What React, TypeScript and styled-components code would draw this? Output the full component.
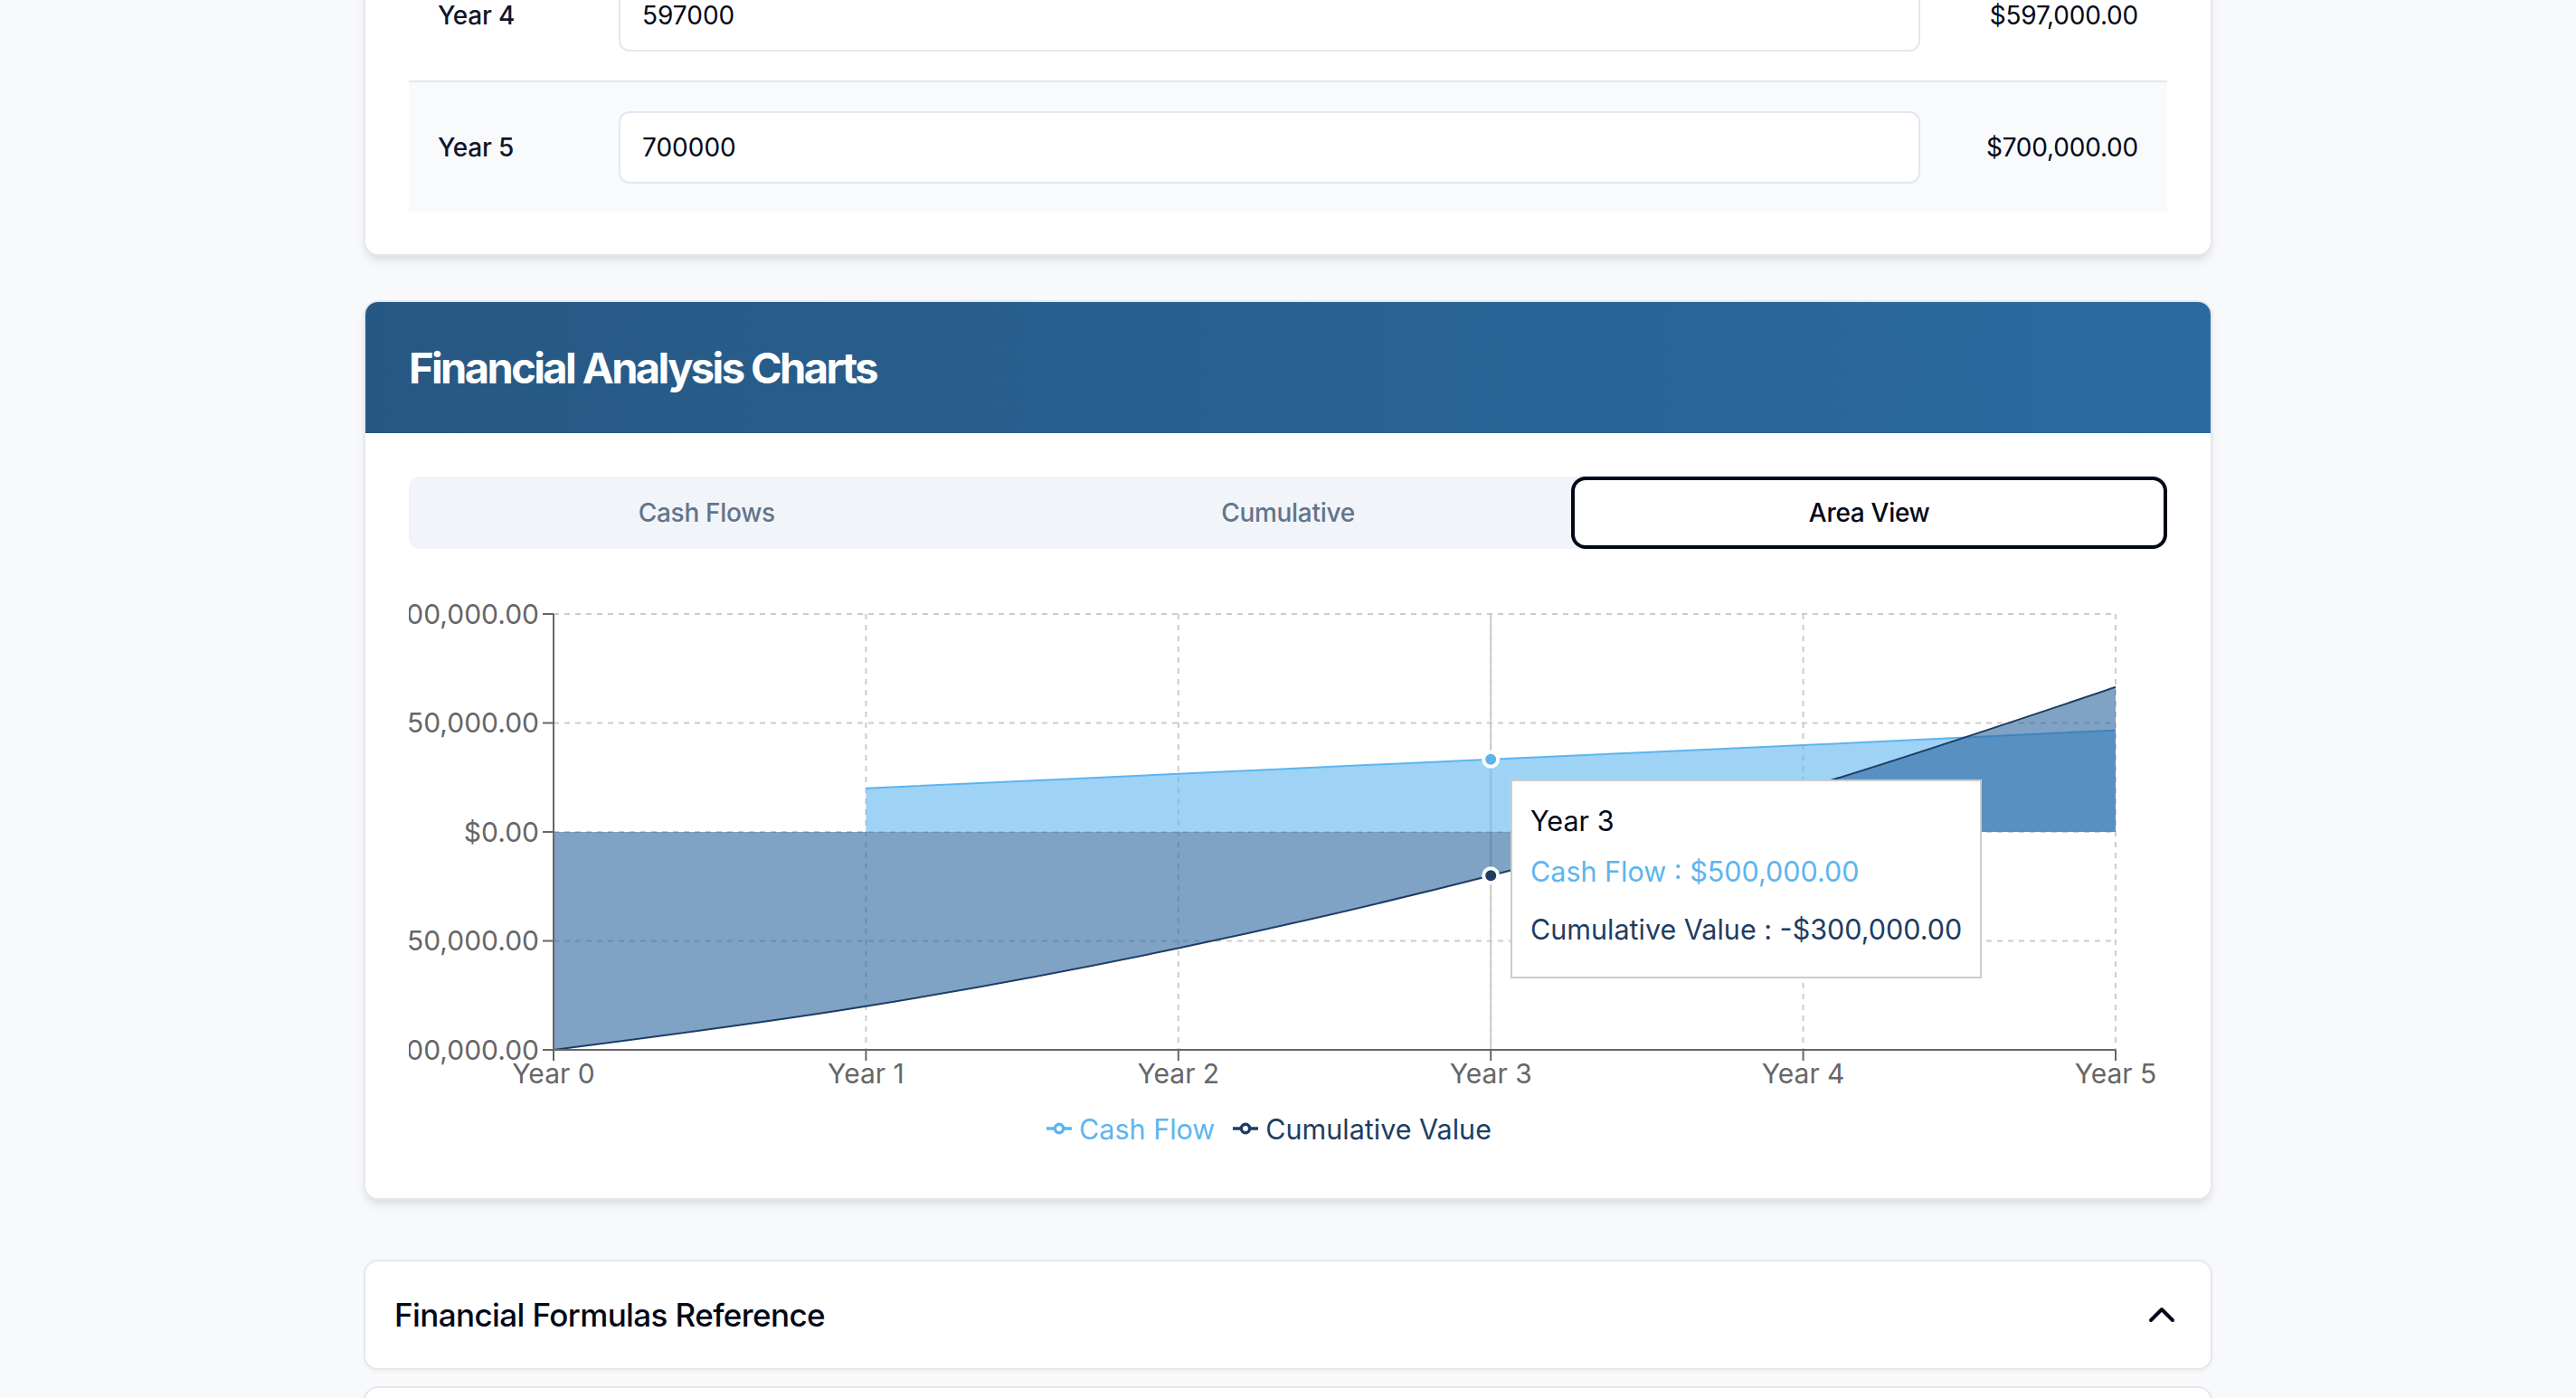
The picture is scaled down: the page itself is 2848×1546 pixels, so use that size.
import React from "react";
import styled, { createGlobalStyle } from "styled-components";
import { ChevronUp } from "lucide-react";

const CASH = "#5db5ef";
const CUM_STROKE = "#1e3d63";
const CUM_FILL = "#2a649e";

const GlobalStyle = createGlobalStyle`
  html, body {
    margin: 0;
    padding: 0;
    background: #f8f9fb;
    overflow: hidden;
  }
  body {
    font-family: Inter, "Noto Sans", "Liberation Sans", sans-serif;
    color: #020817;
  }
  *, *::before, *::after { box-sizing: border-box; }
`;

const Page = styled.main`
  width: 2044px;
  margin: -105px auto 0;
  display: flex;
  flex-direction: column;
`;

const Card = styled.section<{ $gapTop?: number; $raised?: boolean }>`
  margin-top: ${(p) => p.$gapTop ?? 0}px;
  background: #ffffff;
  border: 2px solid #e5e7eb;
  border-radius: 16px;
  overflow: hidden;
  box-shadow: ${(p) =>
    p.$raised
      ? "0 8px 12px -2px rgba(0,0,0,0.08), 0 4px 8px -4px rgba(0,0,0,0.08)"
      : "0 2px 4px rgba(0,0,0,0.04)"};
`;

const InputsBody = styled.div`
  padding: 48px 48px 46px;
`;

const YearRow = styled.div<{ $shaded: boolean; $first: boolean }>`
  display: grid;
  grid-template-columns: 200px 1fr 241px;
  align-items: center;
  padding: 32px;
  background: ${(p) => (p.$shaded ? "#f8fafc" : "transparent")};
  border-top: ${(p) => (p.$first ? "none" : "2px solid #e5e7eb")};
`;

const YearLabel = styled.span`
  font-size: 28px;
  font-weight: 500;
  color: #0f172a;
  letter-spacing: -0.2px;
`;

const AmountInput = styled.input`
  height: 80px;
  width: 100%;
  border: 2px solid #e2e8f0;
  border-radius: 12px;
  padding: 0 24px;
  background: #ffffff;
  font-family: inherit;
  font-size: 28px;
  color: #020817;
  outline: none;
`;

const AmountText = styled.span`
  text-align: right;
  font-size: 28px;
  color: #020817;
  letter-spacing: -0.2px;
`;

const ChartHeader = styled.header`
  background: linear-gradient(90deg, #275883 0%, #2b6aa0 100%);
  padding: 48px;
`;

const ChartTitle = styled.h2`
  margin: 0;
  color: #ffffff;
  font-size: 47px;
  line-height: 49px;
  font-weight: 700;
  letter-spacing: -2.6px;
`;

const ChartBody = styled.div`
  padding: 48px 48px 46px;
`;

const TabList = styled.div`
  display: grid;
  grid-template-columns: repeat(3, 1fr);
  height: 80px;
  padding: 8px;
  background: #f1f5f9;
  border-radius: 12px;
`;

const Tab = styled.button<{ $active: boolean }>`
  border: 0;
  border-radius: 8px;
  font-family: inherit;
  font-size: 28px;
  font-weight: 500;
  letter-spacing: -0.3px;
  cursor: pointer;
  color: ${(p) => (p.$active ? "#020817" : "#64748b")};
  background: ${(p) => (p.$active ? "#ffffff" : "transparent")};
  box-shadow: ${(p) => (p.$active ? "0 0 0 4px #ffffff, 0 0 0 8px #020817" : "none")};
`;

const ChartArea = styled.div`
  position: relative;
  margin-top: 32px;
  height: 640px;
  display: flex;
  flex-direction: column;
`;

const ChartSvg = styled.svg`
  display: block;
  width: 1948px;
  height: 586px;
`;

const Legend = styled.ul`
  margin: 0;
  padding: 0 22px 0 0;
  list-style: none;
  height: 46px;
  display: flex;
  justify-content: center;
  align-items: center;
  font-size: 30.5px;
`;

const LegendItem = styled.li<{ $color: string }>`
  display: flex;
  align-items: center;
  gap: 8px;
  margin-right: 20px;
  color: ${(p) => p.$color};
`;

const TooltipBox = styled.div`
  position: absolute;
  left: 1218px;
  top: 223px;
  padding: 20px;
  background: #ffffff;
  border: 2px solid #cccccc;
  white-space: nowrap;
  font-size: 30.5px;
  line-height: 48px;
`;

const TooltipLabel = styled.p`
  margin: 0;
  color: #020817;
`;

const TooltipList = styled.ul`
  margin: 0;
  padding: 0;
  list-style: none;
`;

const TooltipItem = styled.li<{ $color: string }>`
  padding: 8px 0;
  color: ${(p) => p.$color};
`;

const AccordionHead = styled.div`
  display: flex;
  align-items: center;
  justify-content: space-between;
  padding: 31px 30px 31px 32px;
`;

const AccordionTitle = styled.h3`
  margin: 0;
  font-size: 35px;
  line-height: 56px;
  font-weight: 500;
  letter-spacing: -0.6px;
  color: #020817;
`;

const NextCard = styled(Card)`
  height: 200px;
`;

/* ---------- chart geometry ---------- */
const L = 160;
const R = 1887;
const T = 40;
const B = 522;
const MAX = 1500000;

const cashFlows: (number | null)[] = [null, 300000, 400000, 500000, 597000, 700000];
const cumulative = [-1500000, -1200000, -800000, -300000, 297000, 997000];
const yTicks = [1500000, 750000, 0, -750000, -1500000];

const xAt = (i: number) => L + (i * (R - L)) / 5;
const yAt = (v: number) => T + ((MAX - v) / (2 * MAX)) * (B - T);

const fmt = (v: number) =>
  (v < 0 ? "-$" : "$") +
  Math.abs(v).toLocaleString("en-US", { minimumFractionDigits: 2, maximumFractionDigits: 2 });

function monotonePath(pts: [number, number][]): string {
  const n = pts.length;
  const sign = (v: number) => (v < 0 ? -1 : 1);
  const t: number[] = new Array(n).fill(0);
  for (let i = 1; i < n - 1; i++) {
    const [x0, y0] = pts[i - 1];
    const [x1, y1] = pts[i];
    const [x2, y2] = pts[i + 1];
    const h0 = x1 - x0;
    const h1 = x2 - x1;
    const s0 = (y1 - y0) / h0;
    const s1 = (y2 - y1) / h1;
    const p = (s0 * h1 + s1 * h0) / (h0 + h1);
    t[i] = (sign(s0) + sign(s1)) * Math.min(Math.abs(s0), Math.abs(s1), 0.5 * Math.abs(p)) || 0;
  }
  const slope2 = (a: number, b: number, tt: number) => {
    const h = pts[b][0] - pts[a][0];
    return h ? (3 * (pts[b][1] - pts[a][1])) / h / 2 - tt / 2 : tt;
  };
  t[0] = slope2(0, 1, t[1]);
  t[n - 1] = slope2(n - 2, n - 1, t[n - 2]);
  let d = `M${pts[0][0]},${pts[0][1]}`;
  for (let i = 0; i < n - 1; i++) {
    const [x0, y0] = pts[i];
    const [x1, y1] = pts[i + 1];
    const dx = (x1 - x0) / 3;
    d += `C${x0 + dx},${y0 + dx * t[i]},${x1 - dx},${y1 - dx * t[i + 1]},${x1},${y1}`;
  }
  return d;
}

function areaPath(pts: [number, number][]): string {
  const zero = yAt(0);
  return `${monotonePath(pts)}L${pts[pts.length - 1][0]},${zero}L${pts[0][0]},${zero}Z`;
}

const cashPts: [number, number][] = cashFlows
  .map((v, i) => (v === null ? null : ([xAt(i), yAt(v)] as [number, number])))
  .filter((p): p is [number, number] => p !== null);
const cumPts: [number, number][] = cumulative.map((v, i) => [xAt(i), yAt(v)]);

const LegendIcon: React.FC<{ color: string }> = ({ color }) => (
  <svg width="28" height="28" viewBox="0 0 32 32">
    <path
      d="M0,16h10.667A5.333,5.333,0,1,1,21.333,16H32M21.333,16A5.333,5.333,0,1,1,10.667,16"
      fill="none"
      stroke={color}
      strokeWidth={4}
    />
  </svg>
);

const AreaChart: React.FC = () => (
  <ChartSvg viewBox="0 0 1948 586">
    {/* grid */}
    <g stroke="#cccccc" strokeWidth={2} strokeDasharray="6 6" fill="none">
      {yTicks.map((v) => (
        <line key={`h${v}`} x1={L} x2={R} y1={yAt(v)} y2={yAt(v)} />
      ))}
      {[0, 1, 2, 3, 4, 5].map((i) => (
        <line key={`v${i}`} x1={xAt(i)} x2={xAt(i)} y1={T} y2={B} />
      ))}
    </g>
    {/* tooltip cursor */}
    <line x1={xAt(3)} x2={xAt(3)} y1={T} y2={B} stroke="#cccccc" strokeWidth={2} />
    {/* cash flow area */}
    <path d={areaPath(cashPts)} fill={CASH} fillOpacity={0.6} stroke="none" />
    <path d={monotonePath(cashPts)} fill="none" stroke={CASH} strokeWidth={2} />
    {/* cumulative area */}
    <path d={areaPath(cumPts)} fill={CUM_FILL} fillOpacity={0.6} stroke="none" />
    <path d={monotonePath(cumPts)} fill="none" stroke={CUM_STROKE} strokeWidth={2} />
    {/* axes */}
    <g stroke="#666666" strokeWidth={2}>
      <line x1={L} x2={L} y1={T} y2={B} />
      <line x1={L} x2={R} y1={B} y2={B} />
      {yTicks.map((v) => (
        <line key={`yt${v}`} x1={L - 12} x2={L} y1={yAt(v)} y2={yAt(v)} />
      ))}
      {[0, 1, 2, 3, 4, 5].map((i) => (
        <line key={`xt${i}`} x1={xAt(i)} x2={xAt(i)} y1={B} y2={B + 12} />
      ))}
    </g>
    <g fill="#666666" fontSize={30} fontFamily="Inter, 'Noto Sans', sans-serif">
      {yTicks.map((v) => (
        <text key={`yl${v}`} x={L - 16} y={yAt(v)} dy="0.355em" textAnchor="end">
          {fmt(v)}
        </text>
      ))}
      {[0, 1, 2, 3, 4, 5].map((i) => (
        <text key={`xl${i}`} x={xAt(i)} y={B + 16} dy="0.71em" textAnchor="middle">
          {`Year ${i}`}
        </text>
      ))}
    </g>
    {/* active dots */}
    <circle cx={xAt(3)} cy={yAt(500000)} r={8} fill={CASH} stroke="#ffffff" strokeWidth={4} />
    <circle cx={xAt(3)} cy={yAt(-300000)} r={8} fill={CUM_STROKE} stroke="#ffffff" strokeWidth={4} />
  </ChartSvg>
);

const rows = [
  { year: 4, value: 597000 },
  { year: 5, value: 700000 },
];

const App: React.FC = () => (
  <>
    <GlobalStyle />
    <Page>
      <Card $raised>
        <InputsBody>
          {rows.map((r, idx) => (
            <YearRow key={r.year} $first={idx === 0} $shaded={r.year % 2 === 1}>
              <YearLabel>{`Year ${r.year}`}</YearLabel>
              <AmountInput defaultValue={String(r.value)} />
              <AmountText>{fmt(r.value)}</AmountText>
            </YearRow>
          ))}
        </InputsBody>
      </Card>

      <Card $gapTop={49} $raised>
        <ChartHeader>
          <ChartTitle>Financial Analysis Charts</ChartTitle>
        </ChartHeader>
        <ChartBody>
          <TabList>
            <Tab $active={false}>Cash Flows</Tab>
            <Tab $active={false}>Cumulative</Tab>
            <Tab $active>Area View</Tab>
          </TabList>
          <ChartArea>
            <AreaChart />
            <Legend>
              <LegendItem $color={CASH}>
                <LegendIcon color={CASH} />
                Cash Flow
              </LegendItem>
              <LegendItem $color={CUM_STROKE}>
                <LegendIcon color={CUM_STROKE} />
                Cumulative Value
              </LegendItem>
            </Legend>
            <TooltipBox>
              <TooltipLabel>Year 3</TooltipLabel>
              <TooltipList>
                <TooltipItem $color={CASH}>Cash Flow : $500,000.00</TooltipItem>
                <TooltipItem $color={CUM_STROKE}>Cumulative Value : -$300,000.00</TooltipItem>
              </TooltipList>
            </TooltipBox>
          </ChartArea>
        </ChartBody>
      </Card>

      <Card $gapTop={66}>
        <AccordionHead>
          <AccordionTitle>Financial Formulas Reference</AccordionTitle>
          <ChevronUp size={48} strokeWidth={2} color="#020817" />
        </AccordionHead>
      </Card>

      <NextCard $gapTop={18} />
    </Page>
  </>
);

export default App;
